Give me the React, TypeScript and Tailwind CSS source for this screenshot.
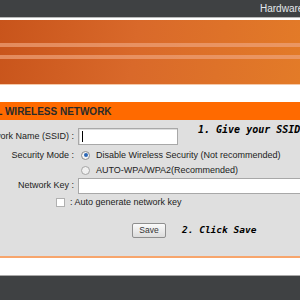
export default function App() {
  return (
    <div className="w-[300px] h-[300px] overflow-hidden bg-white flex flex-col font-['Liberation_Sans',Arial,sans-serif] text-[#222]">
      {/* top bar */}
      <div className="h-[17px] shrink-0 bg-[#3f4143] flex items-center pl-[260px]">
        <span className="text-[10px] text-[#e4e8ec] whitespace-nowrap leading-none">Hardware Version : A1</span>
      </div>
      <div className="h-[1px] shrink-0 bg-[#b9b9b9]" />
      <div className="h-[2px] shrink-0 bg-white" />

      {/* orange banner */}
      <div className="h-[64px] shrink-0 bg-[linear-gradient(100deg,#c8541b_0%,#d9692a_45%,#e37b28_100%)] flex flex-col">
        <div className="h-[23px] shrink-0" />
        <div className="h-[4px] shrink-0 bg-[#eea27a]/70" />
        <div className="h-[8px] shrink-0" />
        <div className="h-[4px] shrink-0 bg-[#eea27a]/70" />
      </div>
      <div className="h-[1px] shrink-0 bg-[#f5c9a8]" />
      <div className="h-[17px] shrink-0 bg-white" />

      {/* section header */}
      <div className="h-[18px] shrink-0 bg-[#ff6a00] flex items-center">
        <span className="ml-[-41px] text-[10px] font-bold text-[#2a2a2a] whitespace-nowrap">MANUAL WIRELESS NETWORK</span>
      </div>

      {/* body */}
      <div className="h-[136px] shrink-0 bg-[#dfdfdf] flex flex-col pt-[8px] text-[9px] leading-none">
        <div className="flex items-center h-[17px]">
          <div className="w-[74px] shrink-0 flex justify-end whitespace-nowrap">Network Name (SSID) :</div>
          <div className="w-[100px] h-[17px] shrink-0 ml-[4px] bg-white border border-[#a8a8a8] shadow-[inset_1px_1px_0_#ddd] flex items-center pl-[3px]">
            <div className="w-[1px] h-[11px] bg-black" />
          </div>
          <span className="ml-[20px] -mt-[14px] text-[10px] font-bold italic text-black whitespace-nowrap font-['DejaVu_Sans_Mono',monospace]">1. Give your SSID</span>
        </div>

        <div className="flex items-center h-[16px] mt-[2px]">
          <div className="w-[74px] shrink-0 flex justify-end whitespace-nowrap">Security Mode :</div>
          <div className="ml-[7px] w-[9px] h-[9px] rounded-full border border-[#8c8c8c] bg-[#f4f4f4] flex items-center justify-center">
            <div className="w-[4px] h-[4px] rounded-full bg-[#2b66b5]" />
          </div>
          <span className="ml-[6px] whitespace-nowrap">Disable Wireless Security (Not recommended)</span>
        </div>

        <div className="flex items-center h-[14px]">
          <div className="w-[74px] shrink-0" />
          <div className="ml-[7px] w-[9px] h-[9px] rounded-full border border-[#a5a5a5] bg-[#f0f0f0]" />
          <span className="ml-[6px] whitespace-nowrap">AUTO-WPA/WPA2(Recommended)</span>
        </div>

        <div className="flex items-center h-[17px]">
          <div className="w-[74px] shrink-0 flex justify-end whitespace-nowrap">Network Key :</div>
          <div className="w-[230px] h-[16px] ml-[4px] bg-white border border-[#a8a8a8] shrink-0" />
        </div>

        <div className="flex items-center h-[15px] mt-[1px]">
          <div className="ml-[56px] w-[9px] h-[9px] bg-white border border-[#b0b0b0]" />
          <span className="ml-[5px] whitespace-nowrap">: Auto generate network key</span>
        </div>

        <div className="flex items-center h-[20px] mt-[10px]">
          <button className="ml-[132px] w-[34px] h-[15px] rounded-[2px] border border-[#8f8f8f] bg-[linear-gradient(#fafafa,#dcdcdc)] text-[8.5px] text-[#333] flex items-center justify-center">
            Save
          </button>
          <span className="ml-[16px] text-[9.5px] font-bold italic text-black whitespace-nowrap font-['DejaVu_Sans_Mono',monospace]">2. Click Save</span>
        </div>
      </div>

      <div className="h-[2px] shrink-0 bg-[#f7a56c]" />
      <div className="h-[17px] shrink-0 bg-white" />
      <div className="h-[1px] shrink-0 bg-[#a9a9a9]" />
      <div className="flex-1 bg-[#3f4143]" />
    </div>
  );
}
